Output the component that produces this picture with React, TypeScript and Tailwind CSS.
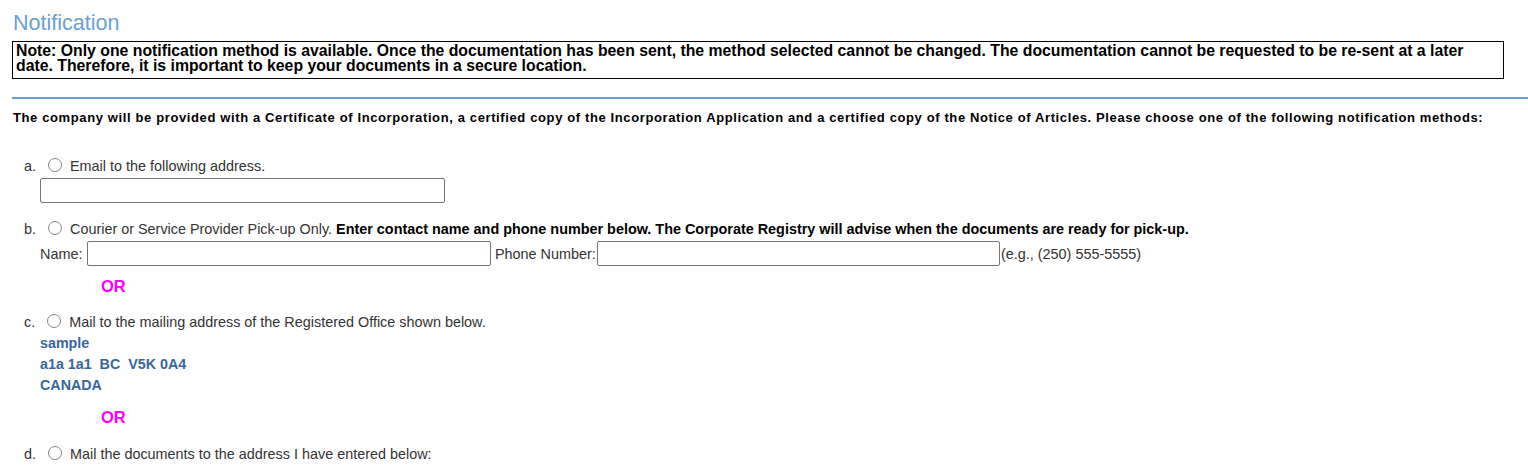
import React from "react";

function Radio() {
  return (
    <span className="inline-block shrink-0 w-[14px] h-[14px] rounded-full border border-[#858585] bg-white ml-[12px] mr-[8px] relative top-[-1px]" />
  );
}

function Or() {
  return (
    <div className="pl-[101px] text-[16.5px] font-bold text-[#ff00ff] leading-[20px]">OR</div>
  );
}

export default function App() {
  return (
    <div className="bg-white w-[1528px] h-[472px] overflow-hidden text-[#333] font-['Liberation_Sans',Arial,sans-serif]">
      <div className="pl-[12px] pt-[10px]">
        <h1 className="text-[21.5px] leading-[26px] text-[#6a9fd4] font-normal pl-[1px]">Notification</h1>
        <div className="mt-[5px] w-[1492px] h-[38px] border border-black px-[3px] pt-[1px] text-[15.8px] leading-[15px] font-bold text-black">
          Note: Only one notification method is available. Once the documentation has been sent, the method selected cannot be changed. The documentation cannot be requested to be re-sent at a later date. Therefore, it is important to keep your documents in a secure location.
        </div>
      </div>
      <div className="mt-[18px] ml-[12px] h-[2px] bg-[#6b9bd2]" />
      <p className="mt-[11px] pl-[13px] text-[13px] leading-[16px] font-bold text-black tracking-[0.62px] whitespace-nowrap">
        The company will be provided with a Certificate of Incorporation, a certified copy of the Incorporation Application and a certified copy of the Notice of Articles. Please choose one of the following notification methods:
      </p>
      <div className="pl-[24px] mt-[32px] text-[14.4px] leading-[16px]">
        <div className="flex items-center"><span>a.</span><Radio /><span>Email to the following address.</span></div>
      </div>
      <div className="pl-[40px] mt-[4px]">
        <div className="w-[405px] h-[25px] border border-[#767676] rounded-[2px]" />
      </div>
      <div className="pl-[24px] mt-[18px] text-[14.4px] leading-[16px]">
        <div className="flex items-center whitespace-nowrap">
          <span>b.</span><Radio />
          <span>Courier or Service Provider Pick-up Only. <b className="text-black">Enter contact name and phone number below. The Corporate Registry will advise when the documents are ready for pick-up.</b></span>
        </div>
      </div>
      <div className="pl-[40px] mt-[4px] flex items-center text-[14.4px] leading-[16px]">
        <span className="w-[47px] whitespace-nowrap">Name:</span>
        <div className="w-[404px] h-[25px] border border-[#767676] rounded-[2px]" />
        <span className="pl-[4px] w-[106px] whitespace-nowrap">Phone Number:</span>
        <div className="w-[403px] h-[25px] border border-[#767676] rounded-[2px]" />
        <span className="ml-[1px] whitespace-nowrap">(e.g., (250) 555-5555)</span>
      </div>
      <div className="mt-[10px]"><Or /></div>
      <div className="pl-[24px] mt-[18px] text-[14.4px] leading-[16px]">
        <div className="flex items-center"><span>c.</span><Radio /><span>Mail to the mailing address of the Registered Office shown below.</span></div>
      </div>
      <div className="pl-[40px] mt-[3px] text-[14.3px] leading-[21px] font-bold text-[#38669c]">
        <div>sample</div>
        <div className="whitespace-pre">a1a 1a1  BC  V5K 0A4</div>
        <div>CANADA</div>
      </div>
      <div className="mt-[11px]"><Or /></div>
      <div className="pl-[24px] mt-[19px] text-[14.4px] leading-[16px]">
        <div className="flex items-center"><span>d.</span><Radio /><span>Mail the documents to the address I have entered below:</span></div>
      </div>
    </div>
  );
}
